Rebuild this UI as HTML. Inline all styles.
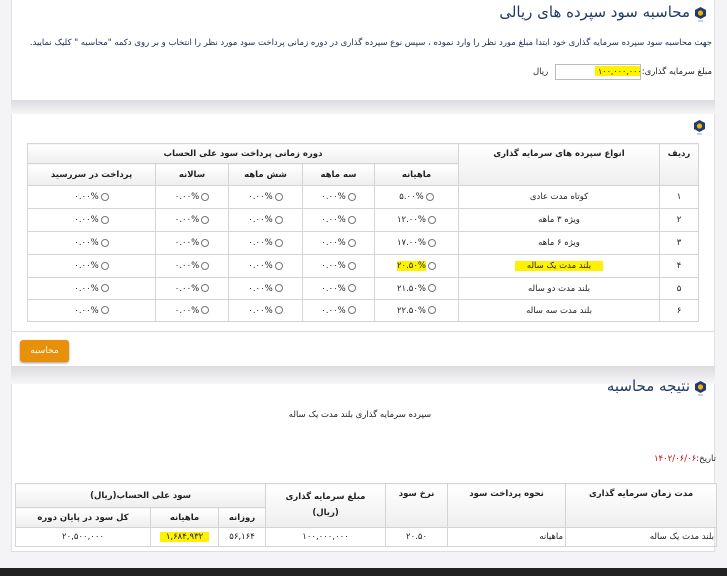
<!DOCTYPE html>
<html><head><meta charset="utf-8"><style>
*{margin:0;padding:0;box-sizing:border-box}
body{width:727px;height:576px;overflow:hidden;background:#f4f4f6;font-family:"DejaVu Sans","Liberation Sans",sans-serif;font-size:9px;color:#222;position:relative}
.abs{position:absolute}
.panel{position:absolute;left:11px;width:704px;background:#fff;border-left:1px solid #e2e2e2;border-right:1px solid #e2e2e2}
.hdr{position:absolute;left:11px;width:704px;background:linear-gradient(#dcdce0,#f6f6f8)}
table{position:absolute;border-collapse:collapse;direction:rtl;table-layout:fixed}
td,th{border:1px solid #d4d4d4;text-align:center;font-size:8.5px;padding:0;white-space:nowrap;overflow:hidden}
th{background:linear-gradient(#fff,#eeeeee);font-weight:bold}
.r{display:inline-block;width:8px;height:8px;border:1px solid #777;border-radius:50%;vertical-align:middle;margin-left:2px}
.hl{background:#fff200}
.ttl{font-size:15px;color:#1f3a66;direction:rtl;white-space:nowrap}
</style></head><body>
<div class="panel" style="top:0;height:100px"></div>
<div class="hdr" style="top:100px;height:14px"></div>
<div class="panel" style="top:114px;height:218px;border-bottom:1px solid #ddd"></div>
<div class="panel" style="top:332px;height:36px"></div>
<div class="hdr" style="top:366px;height:18px"></div>
<div class="panel" style="top:384px;height:168px;border-bottom:1px solid #ddd"></div>
<div class="abs" style="top:568px;left:0;width:727px;height:8px;background:#222"></div>

<svg class="abs" style="left:695px;top:7px" width="11" height="15" viewBox="0 0 11 15"><polygon points="5.5,0 11,3 11,9 5.5,12 0,9 0,3" fill="#1f3a7a"/><circle cx="5.5" cy="6" r="2.6" fill="#f2b400"/><rect x="3" y="13" width="5" height="2" fill="#c6d0e0"/></svg>
<div class="abs ttl" style="right:37px;top:3px">محاسبه سود سپرده های ریالی</div>
<div class="abs" style="right:15px;top:38px;direction:rtl;font-size:8.5px;color:#1a2a55;white-space:nowrap">جهت محاسبه سود سپرده سرمایه گذاری خود ابتدا مبلغ مورد نظر را وارد نموده ، سپس نوع سپرده گذاری در دوره زمانی پرداخت سود مورد نظر را انتخاب و بر روی دکمه "محاسبه " کلیک نمایید.</div>
<div class="abs" style="right:15px;top:67px;direction:rtl;font-size:8.5px;white-space:nowrap">مبلغ سرمایه گذاری:</div>
<div class="abs" style="left:555px;top:64px;width:86px;height:16px;border:1px solid #bbb;background:#fff"></div>
<div class="abs hl" style="left:595px;top:66px;width:45px;height:10px"></div>
<div class="abs" style="left:598px;top:67px;font-size:8px">۱۰۰,۰۰۰,۰۰۰</div>
<div class="abs" style="left:533px;top:67px;font-size:8.5px">ریال</div>

<svg class="abs" style="left:694px;top:120px" width="11" height="15" viewBox="0 0 11 15"><polygon points="5.5,0 11,3 11,9 5.5,12 0,9 0,3" fill="#1f3a7a"/><circle cx="5.5" cy="6" r="2.6" fill="#f2b400"/><rect x="3" y="13" width="5" height="2" fill="#c6d0e0"/></svg>

<table style="left:27px;top:143px;width:671px">
<colgroup><col style="width:39px"><col style="width:201px"><col style="width:84px"><col style="width:72px"><col style="width:74px"><col style="width:73px"><col style="width:128px"></colgroup>
<tr style="height:20px"><th rowspan="2" style="vertical-align:top;padding-top:5px">ردیف</th><th rowspan="2" style="vertical-align:top;padding-top:5px">انواع سپرده های سرمایه گذاری</th><th colspan="5">دوره زمانی پرداخت سود علی الحساب</th></tr>
<tr style="height:22px"><th>ماهیانه</th><th>سه ماهه</th><th>شش ماهه</th><th>سالانه</th><th>پرداخت در سررسید</th></tr>
<tr style="height:23px"><td>۱</td><td>کوتاه مدت عادی</td><td><span class="r"></span>۵.۰۰%</td><td><span class="r"></span>۰.۰۰%</td><td><span class="r"></span>۰.۰۰%</td><td><span class="r"></span>۰.۰۰%</td><td><span class="r"></span>۰.۰۰%</td></tr>
<tr style="height:23px"><td>۲</td><td>ویژه ۳ ماهه</td><td><span class="r"></span>۱۲.۰۰%</td><td><span class="r"></span>۰.۰۰%</td><td><span class="r"></span>۰.۰۰%</td><td><span class="r"></span>۰.۰۰%</td><td><span class="r"></span>۰.۰۰%</td></tr>
<tr style="height:23px"><td>۳</td><td>ویژه ۶ ماهه</td><td><span class="r"></span>۱۷.۰۰%</td><td><span class="r"></span>۰.۰۰%</td><td><span class="r"></span>۰.۰۰%</td><td><span class="r"></span>۰.۰۰%</td><td><span class="r"></span>۰.۰۰%</td></tr>
<tr style="height:23px"><td>۴</td><td><span class="hl" style="padding:0 12px">بلند مدت یک ساله</span></td><td><span class="r"></span><span class="hl">۲۰.۵۰%</span></td><td><span class="r"></span>۰.۰۰%</td><td><span class="r"></span>۰.۰۰%</td><td><span class="r"></span>۰.۰۰%</td><td><span class="r"></span>۰.۰۰%</td></tr>
<tr style="height:22px"><td>۵</td><td>بلند مدت دو ساله</td><td><span class="r"></span>۲۱.۵۰%</td><td><span class="r"></span>۰.۰۰%</td><td><span class="r"></span>۰.۰۰%</td><td><span class="r"></span>۰.۰۰%</td><td><span class="r"></span>۰.۰۰%</td></tr>
<tr style="height:22px"><td>۶</td><td>بلند مدت سه ساله</td><td><span class="r"></span>۲۲.۵۰%</td><td><span class="r"></span>۰.۰۰%</td><td><span class="r"></span>۰.۰۰%</td><td><span class="r"></span>۰.۰۰%</td><td><span class="r"></span>۰.۰۰%</td></tr>
</table>

<div class="abs" style="left:20px;top:340px;width:49px;height:22px;background:#e8900a;border-radius:3px;color:#fff;font-size:9px;text-align:center;line-height:22px;box-shadow:0 1px 2px #999">محاسبه</div>

<svg class="abs" style="left:695px;top:381px" width="11" height="15" viewBox="0 0 11 15"><polygon points="5.5,0 11,3 11,9 5.5,12 0,9 0,3" fill="#1f3a7a"/><circle cx="5.5" cy="6" r="2.6" fill="#f2b400"/><rect x="3" y="13" width="5" height="2" fill="#c6d0e0"/></svg>
<div class="abs ttl" style="right:37px;top:377px">نتیجه محاسبه</div>
<div class="abs" style="left:260px;top:410px;width:200px;text-align:center;direction:rtl;font-size:8.5px;white-space:nowrap">سپرده سرمایه گذاری بلند مدت یک ساله</div>
<div class="abs" style="right:11px;top:454px;direction:rtl;font-size:8.5px;white-space:nowrap">تاریخ:<span style="color:#d00">۱۴۰۲/۰۶/۰۶</span></div>

<table style="left:15px;top:483px;width:701px">
<colgroup><col style="width:151px"><col style="width:118px"><col style="width:62px"><col style="width:120px"><col style="width:47px"><col style="width:68px"><col style="width:135px"></colgroup>
<tr style="height:24px"><th rowspan="2" style="vertical-align:top;padding-top:5px">مدت زمان سرمایه گذاری</th><th rowspan="2" style="vertical-align:top;padding-top:5px">نحوه پرداخت سود</th><th rowspan="2" style="vertical-align:top;padding-top:5px">نرخ سود</th><th rowspan="2" style="vertical-align:top;padding-top:5px;white-space:normal;line-height:16px">مبلغ سرمایه گذاری<br>(ریال)</th><th colspan="3">سود علی الحساب(ریال)</th></tr>
<tr style="height:20px"><th>روزانه</th><th>ماهیانه</th><th>کل سود در پایان دوره</th></tr>
<tr style="height:19px"><td style="text-align:right;padding-right:2px">بلند مدت یک ساله</td><td style="text-align:right;padding-right:2px">ماهیانه</td><td>۲۰.۵۰</td><td>۱۰۰,۰۰۰,۰۰۰</td><td>۵۶,۱۶۴</td><td><span class="hl" style="padding:0 6px">۱,۶۸۴,۹۳۲</span></td><td>۲۰,۵۰۰,۰۰۰</td></tr>
</table>
</body></html>
